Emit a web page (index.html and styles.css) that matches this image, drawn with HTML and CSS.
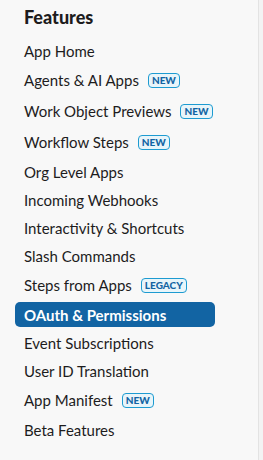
FILE: index.html
```html
<!DOCTYPE html>
<html lang="en">
<head>
  <meta charset="UTF-8" />
  <meta name="viewport" content="width=device-width, initial-scale=1" />
  <title>Features</title>
  <link rel="stylesheet" href="styles.css">
</head>
<body>
  <nav class="sidebar">
    <h2 class="section-title">Features</h2>
    <ul class="nav-list">
      <li class="nav-item"><a class="nav-link" href="#">App Home</a></li>
      <li class="nav-item tall"><a class="nav-link" href="#">Agents &amp; AI Apps <span class="badge">New</span></a></li>
      <li class="nav-item tall"><a class="nav-link" href="#">Work Object Previews <span class="badge">New</span></a></li>
      <li class="nav-item tall"><a class="nav-link" href="#">Workflow Steps <span class="badge">New</span></a></li>
      <li class="nav-item"><a class="nav-link" href="#">Org Level Apps</a></li>
      <li class="nav-item"><a class="nav-link" href="#">Incoming Webhooks</a></li>
      <li class="nav-item"><a class="nav-link" href="#">Interactivity &amp; Shortcuts</a></li>
      <li class="nav-item"><a class="nav-link" href="#">Slash Commands</a></li>
      <li class="nav-item tall"><a class="nav-link" href="#">Steps from Apps <span class="badge">Legacy</span></a></li>
      <li class="nav-item"><a class="nav-link active" href="#">OAuth &amp; Permissions</a></li>
      <li class="nav-item"><a class="nav-link" href="#">Event Subscriptions</a></li>
      <li class="nav-item"><a class="nav-link" href="#">User ID Translation</a></li>
      <li class="nav-item tall"><a class="nav-link" href="#">App Manifest <span class="badge">New</span></a></li>
      <li class="nav-item"><a class="nav-link" href="#">Beta Features</a></li>
    </ul>
  </nav>
</body>
</html>
```

FILE: styles.css
```css
html, body {
  margin: 0;
  padding: 0;
  height: 100%;
}
body {
  font-family: Lato, "Noto Sans", sans-serif;
  background: #f3f3f3;
  color: #1d1c1d;
}
.sidebar {
  width: 259px;
  height: 100%;
  box-sizing: border-box;
  border-right: 1px solid #e3e3e3;
  padding: 5px 0 0 15px;
  background: #f8f8f8;
}
.section-title {
  margin: 0 0 0 9px;
  font-size: 18px;
  font-weight: 900;
  line-height: 24px;
  height: 32px;
}
.nav-list {
  list-style: none;
  margin: 0;
  padding: 0;
}
.nav-item {
  height: 28px;
  padding-top: 1px;
  padding-bottom: 2px;
  box-sizing: border-box;
}
.nav-item.tall {
  height: 31px;
}
.nav-link {
  display: flex;
  align-items: center;
  height: 100%;
  width: 200px;
  box-sizing: border-box;
  padding-left: 9px;
  border-radius: 5px;
  font-size: 15px;
  color: #1d1c1d;
  text-decoration: none;
}
.nav-link.active {
  background: #1264a3;
  color: #fff;
  font-weight: 700;
}
.badge {
  margin-left: 9px;
  padding: 0 3px;
  height: 13px;
  line-height: 13px;
  font-size: 10px;
  font-weight: 900;
  text-transform: uppercase;
  color: #1264a3;
  background: #e8f5fa;
  border: 1px solid #1d9bd1;
  border-radius: 4px;
}
```
